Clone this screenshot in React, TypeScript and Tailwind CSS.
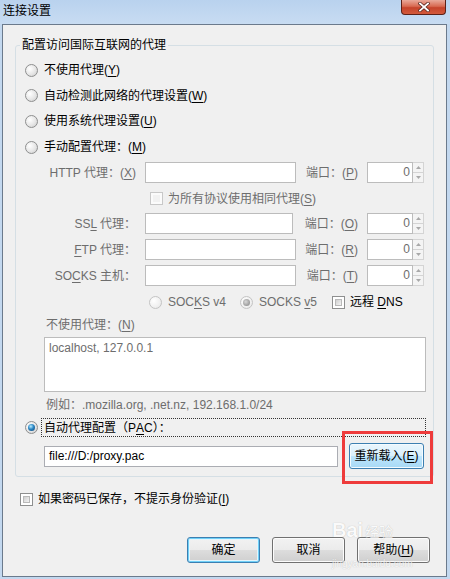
import React from "react";

type Mn = { text: string; k?: string; after?: string };

// Label with a Windows-style mnemonic underline, e.g. 不使用代理(<u>Y</u>)
function Mnemonic({ text, k, after = "" }: Mn) {
  if (!k) return <>{text}</>;
  return (
    <>
      {text}
      <u className="underline-offset-2">{k}</u>
      {after}
    </>
  );
}

function Radio({ checked = false, disabled = false }: { checked?: boolean; disabled?: boolean }) {
  return (
    <span
      className={
        "relative inline-block w-[13px] h-[13px] shrink-0 rounded-full border " +
        (disabled
          ? "border-[#c4c4c4] bg-[radial-gradient(circle_at_35%_35%,#ffffff,#f0f0f0_60%,#e4e4e4)]"
          : "border-[#8e8f8f] bg-[radial-gradient(circle_at_35%_35%,#ffffff,#e6e6e6_55%,#c9c9c9)]")
      }
    >
      {checked && (
        <span
          className={
            "absolute left-[2px] top-[2px] w-[7px] h-[7px] rounded-full " +
            (disabled
              ? "bg-[radial-gradient(circle_at_40%_40%,#d8d8d8,#9a9a9a_70%)]"
              : "bg-[radial-gradient(circle_at_40%_35%,#b8ecff,#2a86c4_45%,#0d3d6b_100%)]")
          }
        />
      )}
    </span>
  );
}

function Check({ disabled = false }: { disabled?: boolean }) {
  return (
    <span
      className={
        "inline-block w-[13px] h-[13px] shrink-0 border p-[2px] " +
        (disabled ? "border-[#c8c8c8] bg-[#fbfbfb]" : "border-[#8e8f8f] bg-white")
      }
    >
      <span
        className={
          "block w-full h-full " +
          (disabled
            ? "bg-[#f2f2f2]"
            : "bg-[linear-gradient(135deg,#cfcfcf,#f4f4f4)] border border-[#b9b9b9]")
        }
      />
    </span>
  );
}

function Spinner() {
  return (
    <div className="w-[11px] h-[21px] flex flex-col border border-l-0 border-[#d4d4d4] bg-[#f4f4f4]">
      <div className="flex-1 flex items-center justify-center border-b border-[#d4d4d4]">
        <svg width="5" height="3" viewBox="0 0 5 3">
          <path d="M0 3 L2.5 0 L5 3 Z" fill="#a8a8a8" />
        </svg>
      </div>
      <div className="flex-1 flex items-center justify-center">
        <svg width="5" height="3" viewBox="0 0 5 3">
          <path d="M0 0 L2.5 3 L5 0 Z" fill="#a8a8a8" />
        </svg>
      </div>
    </div>
  );
}

interface ProxyRowProps {
  label: React.ReactNode;
  port: React.ReactNode;
  inputWidth: string;
  className?: string;
}

function ProxyRow({ label, port, inputWidth, className = "" }: ProxyRowProps) {
  return (
    <div className={"flex items-center h-[21px] pl-[28px] w-[408px] " + className}>
      <div className="w-[92px] text-right whitespace-nowrap text-[#6d6d6d]">{label}</div>
      <div className={"ml-[9px] h-[21px] bg-white border border-[#bcbcbc] " + inputWidth} />
      <div className="flex-1 text-right whitespace-nowrap text-[#6d6d6d]">{port}</div>
      <div className="ml-[9px] w-[46px] h-[21px] bg-white border border-[#bcbcbc] text-right pr-[2px] leading-[19px] text-[#6d6d6d]">
        0
      </div>
      <Spinner />
    </div>
  );
}

function WinButton({
  children,
  variant = "normal",
  className = "",
}: {
  children: React.ReactNode;
  variant?: "normal" | "default" | "hot";
  className?: string;
}) {
  const look =
    variant === "hot"
      ? "border-[#3c7fb1] bg-[linear-gradient(#eaf6fd_0%,#d9f0fc_50%,#bee6fd_50%,#a7d9f5_100%)] shadow-[inset_0_0_0_1px_#f4fbff]"
      : variant === "default"
      ? "border-[#3c7fb1] bg-[linear-gradient(#f2f2f2_0%,#ebebeb_50%,#dddddd_50%,#cfcfcf_100%)] shadow-[inset_0_0_0_1px_#6fd0f8,inset_0_0_0_2px_#e4f5fc]"
      : "border-[#707070] bg-[linear-gradient(#f2f2f2_0%,#ebebeb_50%,#dddddd_50%,#cfcfcf_100%)] shadow-[inset_0_0_0_1px_#fcfcfc]";
  return (
    <button
      className={"h-[26px] rounded-[3px] border text-[12px] text-black leading-none " + look + " " + className}
    >
      {children}
    </button>
  );
}

export default function App() {
  return (
    <div className="relative w-[450px] h-[579px] flex flex-col overflow-hidden bg-[#c3d8ef] text-[12px] leading-[16px] text-black [font-family:'Liberation_Sans','Noto_Sans_CJK_SC',sans-serif]">
      {/* title bar */}
      <div className="h-[24px] flex items-start justify-between pl-[3px] pr-[4px] bg-[linear-gradient(180deg,#b9d2ee,#c8dcf2)]">
        <span className="mt-[3px] text-[12px] leading-[16px]">连接设置</span>
        <div className="w-[45px] h-[15px] rounded-b-[4px] border border-t-0 border-[#5c2118] bg-[linear-gradient(#e9a99a_0%,#d86a52_45%,#c5432b_55%,#d35a3c_100%)] flex items-center justify-center">
          <svg width="12" height="10" viewBox="0 0 12 10">
            <path d="M2 1.5 L10 8.5 M10 1.5 L2 8.5" stroke="#5a2a22" strokeWidth="3.4" strokeLinecap="square" />
            <path d="M2 1.5 L10 8.5 M10 1.5 L2 8.5" stroke="#ffffff" strokeWidth="1.8" strokeLinecap="square" />
          </svg>
        </div>
      </div>

      {/* client area */}
      <div className="ml-[2px] mr-[3px] mb-[2px] flex-1 flex flex-col border border-[#6b7a8c] bg-[#f0f0f0]">
        <fieldset className="mt-[12px] ml-[12px] w-[419px] border border-[#d5dfe5] rounded-[3px] pb-[7px] flex flex-col">
          <legend className="ml-[4px] px-[2px] leading-[16px]">配置访问国际互联网的代理</legend>

          <div className="mt-[4px] h-[26px] flex items-center pl-[9px] gap-[6px]">
            <Radio />
            <span>
              <Mnemonic text="不使用代理(" k="Y" after=")" />
            </span>
          </div>
          <div className="h-[25px] flex items-center pl-[9px] gap-[6px]">
            <Radio />
            <span>
              <Mnemonic text="自动检测此网络的代理设置(" k="W" after=")" />
            </span>
          </div>
          <div className="h-[26px] flex items-center pl-[9px] gap-[6px]">
            <Radio />
            <span>
              <Mnemonic text="使用系统代理设置(" k="U" after=")" />
            </span>
          </div>
          <div className="h-[26px] flex items-center pl-[9px] gap-[6px]">
            <Radio />
            <span>
              <Mnemonic text="手动配置代理：(" k="M" after=")" />
            </span>
          </div>

          <ProxyRow
            className="mt-[2px]"
            inputWidth="w-[151px]"
            label={<Mnemonic text="HTTP 代理：(" k="X" after=")" />}
            port={<Mnemonic text="端口：(" k="P" after=")" />}
          />

          <div className="mt-[9px] h-[13px] flex items-center pl-[134px] gap-[5px]">
            <Check disabled />
            <span className="text-[#6d6d6d] whitespace-nowrap">
              <Mnemonic text="为所有协议使用相同代理(" k="S" after=")" />
            </span>
          </div>

          <ProxyRow
            className="mt-[8px]"
            inputWidth="w-[148px]"
            label={
              <>
                SS<u className="underline-offset-2">L</u> 代理：
              </>
            }
            port={<Mnemonic text="端口：(" k="O" after=")" />}
          />
          <ProxyRow
            className="mt-[5px]"
            inputWidth="w-[151px]"
            label={
              <>
                <u className="underline-offset-2">F</u>TP 代理：
              </>
            }
            port={<Mnemonic text="端口：(" k="R" after=")" />}
          />
          <ProxyRow
            className="mt-[5px]"
            inputWidth="w-[151px]"
            label={
              <>
                SO<u className="underline-offset-2">C</u>KS 主机：
              </>
            }
            port={<Mnemonic text="端口：(" k="T" after=")" />}
          />

          <div className="mt-[8px] h-[16px] flex items-center pl-[133px] whitespace-nowrap">
            <div className="w-[91px] flex items-center gap-[6px] text-[#6d6d6d]">
              <Radio disabled />
              <span>
                SOC<u className="underline-offset-2">K</u>S v4
              </span>
            </div>
            <div className="w-[92px] flex items-center gap-[6px] text-[#6d6d6d]">
              <Radio disabled checked />
              <span>
                SOCKS <u className="underline-offset-2">v</u>5
              </span>
            </div>
            <div className="flex items-center gap-[5px]">
              <Check />
              <span>
                远程 <u className="underline-offset-2">D</u>NS
              </span>
            </div>
          </div>

          <div className="mt-[7px] h-[16px] pl-[30px] text-[#6d6d6d]">
            <Mnemonic text="不使用代理：(" k="N" after=")" />
          </div>
          <div className="mt-[4px] ml-[28px] w-[382px] h-[55px] bg-white border border-[#bcbcbc] pt-[2px] pl-[4px] text-[#6d6d6d]">
            localhost, 127.0.0.1
          </div>
          <div className="mt-[5px] h-[16px] pl-[30px] text-[#6d6d6d]">
            例如：.mozilla.org, .net.nz, 192.168.1.0/24
          </div>

          <div className="mt-[5px] h-[19px] flex items-center pl-[9px]">
            <Radio checked />
            <div className="ml-[3px] w-[385px] h-[19px] border border-dotted border-[#333] pl-[2px] flex items-center">
              自动代理配置（P<u className="underline-offset-2">A</u>C）：
            </div>
          </div>

          <div className="mt-[6px] flex items-center pl-[28px]">
            <div className="w-[294px] h-[21px] bg-white border border-[#abadb3] pl-[4px] leading-[19px]">
              file:///D:/proxy.pac
            </div>
            <WinButton variant="hot" className="ml-[11px] w-[75px] h-[25px]">
              <Mnemonic text="重新载入(" k="E" after=")" />
            </WinButton>
          </div>
        </fieldset>

        <div className="mt-[14px] h-[16px] flex items-center pl-[17px] gap-[5px]">
          <Check />
          <span>
            <Mnemonic text="如果密码已保存，不提示身份验证(" k="I" after=")" />
          </span>
        </div>

        <div className="mt-[30px] flex justify-end pr-[16px] gap-[12px]">
          <WinButton variant="default" className="w-[73px]">
            确定
          </WinButton>
          <WinButton className="w-[73px]">取消</WinButton>
          <WinButton className="w-[73px]">
            <Mnemonic text="帮助(" k="H" after=")" />
          </WinButton>
        </div>
      </div>

      {/* red annotation box */}
      <div className="absolute left-[342px] top-[431px] w-[91px] h-[53px] border-[3px] border-[#ee3b3b]" />

      {/* watermark */}
      <div className="absolute left-[332px] top-[520px] flex flex-col items-start opacity-70 pointer-events-none">
        <div className="flex items-end gap-[2px]">
          <span className="text-[20px] leading-[20px] font-bold text-white [text-shadow:0_0_1px_#9a9a9a]">Bai</span>
          <span className="text-[14px] leading-[16px] text-white [text-shadow:0_0_1px_#9a9a9a]">经验</span>
        </div>
        <span className="mt-[18px] text-[10px] leading-[11px] text-white [text-shadow:0_0_1px_#9a9a9a]">
          jingyan.baidu.com
        </span>
      </div>
    </div>
  );
}
